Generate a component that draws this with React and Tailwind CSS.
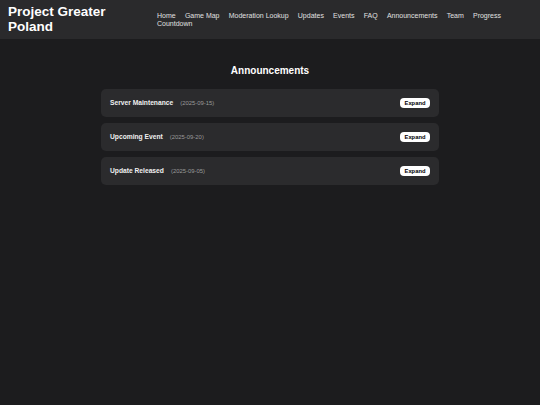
const navLinks = [
  "Home",
  "Game Map",
  "Moderation Lookup",
  "Updates",
  "Events",
  "FAQ",
  "Announcements",
  "Team",
  "Progress",
  "Countdown",
];

const announcements = [
  { id: 1, title: "Server Maintenance", date: "2025-09-15" },
  { id: 2, title: "Upcoming Event", date: "2025-09-20" },
  { id: 3, title: "Update Released", date: "2025-09-05" },
];

function Header() {
  return (
    <header className="flex h-[39px] items-center bg-[#2a2a2c] px-[8px]">
      <h1 className="w-[149px] shrink-0 pr-[40px] text-[13.5px] leading-[14.5px] font-bold text-white">
        Project Greater Poland
      </h1>
      {/* nav wraps onto a second line, like the live site */}
      <nav className="flex flex-1 flex-wrap gap-x-[9.2px] text-[7px] leading-[8px] text-[#e0e0e0]">
        {navLinks.map((link) => (
          <a key={link} href="#" className="whitespace-nowrap">
            {link}
          </a>
        ))}
      </nav>
    </header>
  );
}

function AnnouncementCard({ item }) {
  return (
    <div className="flex h-[28px] items-center justify-between rounded-[5px] bg-[#2b2b2d] px-[9px]">
      <div className="flex items-baseline gap-[7px]">
        <span className="text-[6.7px] font-bold text-[#f0f0f0]">{item.title}</span>
        <span className="text-[5.9px] text-[#9a9a9a]">({item.date})</span>
      </div>
      <button className="flex h-[9.5px] w-[30px] items-center justify-center rounded-[4px] bg-white text-[5.8px] font-bold text-black">
        Expand
      </button>
    </div>
  );
}

export default function App() {
  return (
    <div
      className="min-h-screen bg-[#1c1c1e]"
      style={{ fontFamily: '"Liberation Sans", Arial, sans-serif' }}
    >
      <Header />
      <main className="mx-auto w-[338px] pt-[26px]">
        <h2 className="text-center text-[10px] leading-[12px] font-bold text-white">
          Announcements
        </h2>
        <div className="mt-[12px] flex flex-col gap-[6px]">
          {announcements.map((item) => (
            <AnnouncementCard key={item.id} item={item} />
          ))}
        </div>
      </main>
    </div>
  );
}
